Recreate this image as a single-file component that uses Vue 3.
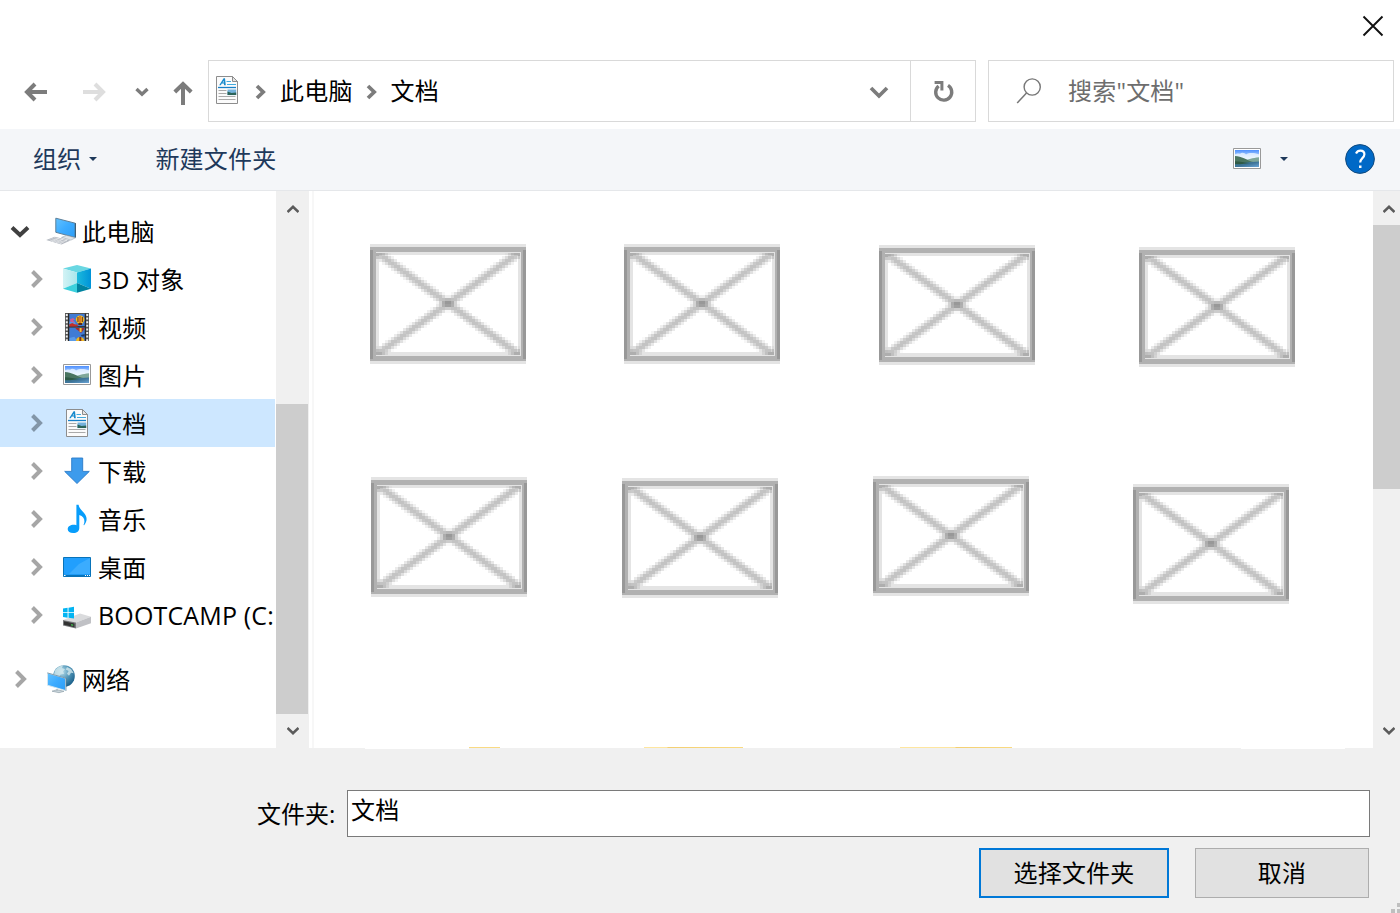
<script setup>
const tree = [
  { icon: 'pc', label: '此电脑', root: true, open: true },
  { icon: 'cube', label: '3D 对象' },
  { icon: 'film', label: '视频' },
  { icon: 'photo', label: '图片' },
  { icon: 'doc', label: '文档', selected: true },
  { icon: 'down', label: '下载' },
  { icon: 'music', label: '音乐' },
  { icon: 'desk', label: '桌面' },
  { icon: 'drive', label: 'BOOTCAMP (C:', latin: true },
  { icon: 'net', label: '网络', root: true, spaced: true },
]

// Soft diagonals of the thumbnail placeholder, sampled on a 3px grid
const cells = []
const len = Math.hypot(156, 112)
for (let r = 3; r < 37; r++) {
  for (let c = 2; c < 50; c++) {
    const x = c * 3 + 1.5 - 78
    const y = r * 3 + 1.5 - 59.5
    const shade = (s) => {
      const d = Math.abs(x * 112 - s * y * 156) / len
      return Math.max(0, Math.min(1, (6.2 - d) / 4.8)) * 0.235
    }
    const a = 1 - (1 - shade(1)) * (1 - shade(-1))
    if (a > 0.015) cells.push({ x: c * 3, y: r * 3, a: a.toFixed(3) })
  }
}
</script>

<template>
  <div class="dialog">
    <svg class="defs" width="0" height="0">
      <defs>
        <linearGradient id="sky" x1="0" y1="0" x2="0" y2="1">
          <stop offset="0" stop-color="#4d8fff" /><stop offset="0.45" stop-color="#c6e2fc" /><stop offset="1" stop-color="#c5e5f6" />
        </linearGradient>
        <linearGradient id="sea" x1="0" y1="0" x2="1" y2="1">
          <stop offset="0" stop-color="#3f7f9c" /><stop offset="0.5" stop-color="#3d7397" /><stop offset="1" stop-color="#6aa5d8" />
        </linearGradient>
        <linearGradient id="screen" x1="0" y1="0" x2="1" y2="1">
          <stop offset="0" stop-color="#62c2ff" /><stop offset="0.5" stop-color="#3cabff" /><stop offset="1" stop-color="#2d9df5" />
        </linearGradient>
        <linearGradient id="cubeL" x1="0" y1="0" x2="1" y2="0"><stop offset="0" stop-color="#d3f3f5" /><stop offset="1" stop-color="#a9e6ec" /></linearGradient>
        <linearGradient id="cubeR" x1="0" y1="0" x2="1" y2="0"><stop offset="0" stop-color="#1bb9dc" /><stop offset="1" stop-color="#0093d8" /></linearGradient>
        <radialGradient id="globe" cx="0.4" cy="0.3" r="0.75"><stop offset="0" stop-color="#b9dfec" /><stop offset="0.5" stop-color="#5296b8" /><stop offset="1" stop-color="#155a85" /></radialGradient>
        <symbol id="i-pc" viewBox="0 0 32 32">
          <path d="M9.8 3.2 29.2 8.2V22.5L9.8 17.3z" fill="url(#screen)" stroke="#5c7f99" stroke-width="1" />
          <path d="M28.9 8 29.9 8.3V22.5l-1 .3z" fill="#36576e" />
          <path d="M15.5 22.4l5-2 9 2.4-4.6 2.3z" fill="#dfe4e8" stroke="#8999a5" stroke-width=".5" />
          <path d="M.2 25 8.7 21.8 24.5 25.4 15.5 29.6z" fill="#b3b8c0" />
          <path d="M3.5 24.8l12 3.5M5.5 23.7l12 3.4M8 22.7l13 3.1M6 26.8l7.5-3.7M9.7 27.8l7.5-3.7M13.5 28.8l7.7-3.8" stroke="#f1f3f5" stroke-width=".6" />
        </symbol>
        <symbol id="i-cube" viewBox="0 0 32 32">
          <path d="M2 5.5 16 2l14 3.5L16 9.6z" fill="#69d7e2" />
          <path d="M2 5.5 16 9.6V20L2 25.8z" fill="url(#cubeL)" />
          <path d="M30 5.5 16 9.6V20l14 5.8z" fill="url(#cubeR)" />
          <path d="M2 25.8 16 20v9.8z" fill="#3bd0dc" /><path d="M30 25.8 16 20v9.8z" fill="#0083a0" />
        </symbol>
        <symbol id="i-film" viewBox="0 0 32 32">
          <path d="M4 2h24v28H4z" fill="#555" /><path d="M8.3 3h15.4v12.4H8.3zM8.3 16.5h15.4V30H8.3z" fill="#407bd4" />
          <path d="M8.3 10.5h5l3 4.9H8.3zM8.3 27l5-1.3 3 4.3h-8z" fill="#5a9be8" />
          <path d="M5.8 3v27M26.2 3v27" stroke="#eee" stroke-width="1.9" stroke-dasharray="2 1.6" />
          <path d="M7.6 2.5V30M24.4 2.5V30M8 15.8h16" stroke="#242424" stroke-width="1" />
          <path d="M14.8 8.5a4.3 4 0 0 1 8.6 0c0 2-2.2 3.5-2.5 5.3h-3.4c-.2-1.8-2.7-3.3-2.7-5.3z" fill="#f2bd1f" />
          <path d="M16.4 6h1.1v5h-1.1zM20.8 6h1.1v5h-1.1z" fill="#7a351c" /><path d="M18.5 5h1v7h-1z" fill="#c43a2e" />
          <path d="M17.3 12h3.8v2h-3.8z" fill="#5a2b14" />
          <path d="M14.5 17h9c-.1 2-2.2 2.7-2.6 4.4h-2C18.5 19.5 15 19 14.5 17z" fill="#a42d33" /><path d="M18.6 17h2v4h-2z" fill="#f2c72e" />
          <path d="M9 8.2l3-1.1 2 1.3-2 1.2 2.2 2.2-4.8-1z" fill="#cd5d96" />
          <path d="M8.3 13.3l3-1.2 2.4 1.2 3 .4v1.7H8.3z" fill="#c52e25" />
          <path d="M15 30c0-5.5 8-5.5 8.5 0z" fill="#efb620" /><path d="M18.3 26h2v4h-2z" fill="#7a351c" /><path d="M20 24l3.7-1v2.6h-3z" fill="#17386e" />
        </symbol>
        <symbol id="i-photo" viewBox="0 0 32 32">
          <path d="M2.5 5.5h27v20h-27z" fill="#fff" stroke="#999" /><path d="M4 7h24v17H4z" fill="url(#sky)" />
          <path d="M4 11.5c2-1.5 4-.9 5-.8 2-1.8 5-.6 6 .8 3-1.8 7-2 13-.3V17H4z" fill="#f4faff" opacity=".75" />
          <path d="M12 17.5c6-.8 9-2.6 16-3.2V20H12z" fill="#7fa79a" />
          <path d="M4 13c3 .2 6.5 1 9 2.2 3 1.4 6 3.2 10 4L18 21H4z" fill="#4a7560" />
          <path d="M4 20l24-1.4V24H4z" fill="url(#sea)" /><path d="M4 18.3c5 .3 9 1 15 1.6L9 21.3H4z" fill="#2f5a45" />
        </symbol>
        <symbol id="i-doc" viewBox="0 0 32 32">
          <path d="M5.5 2.5h16l5 5v22h-21z" fill="#fbfbfb" stroke="#8d8d8d" /><path d="M21.5 2.5v5h5z" fill="#e4e4e4" stroke="#8d8d8d" />
          <path d="M7 13.5h18" stroke="#1680c8" stroke-width="1.3" /><path d="M8.2 11.2h1.6l1-1.7h2l.3 1.7h1.7L14 4.2h-1.4z" fill="#168acd" /><path d="M11.6 8.5h1.2l-.2-1.8z" fill="#fbfbfb" />
          <path d="M15.5 7.5h4.5M16 10.5h9" stroke="#41a9dd" /><path d="M7.5 16.5h8M7.5 19.5h8M7.5 22.5h17M7.5 25.5h17" stroke="#aaa" />
          <path d="M16.5 15.5h8.7v5.6h-8.7z" fill="#75b2dc" /><path d="M16.5 17.5l4 1.5 4.7-.6v2.7h-8.7z" fill="#2b6459" />
        </symbol>
        <symbol id="i-down" viewBox="0 0 32 32"><path d="M10.7 3h11v13.4h6.6L16 28.5 3.7 16.4h7z" fill="#3d9bec" stroke="#2a7ac8" stroke-width=".9" /></symbol>
        <symbol id="i-music" viewBox="0 0 32 32"><path d="M15.4 1.8h2.2c.6 5.5 8 8 8 14.3 0 2.4-1 4.3-2.5 6.2l-.6-.4c1.8-3.8 1.2-8.2-4.2-10v13c0 3-2.3 5.1-6.1 5.1-3.3 0-5.5-1.3-5.5-3.7 0-3.5 4.4-5.3 8.7-4.1z" fill="#079dfb" /></symbol>
        <symbol id="i-desk" viewBox="0 0 32 32">
          <path d="M2.5 6.5h27v19h-27z" fill="#219ffd" stroke="#0873b9" /><path d="M29 7v16H8L18 13l11-6z" fill="#4db5ff" opacity=".6" />
          <path d="M3 23.9h26v1.4H3z" fill="#0873b9" /><path d="M3 24.5h1.5M24 24.5h1M26 24.5h1M28 24.5h1" stroke="#fff" />
        </symbol>
        <symbol id="i-drive" viewBox="0 0 32 32">
          <path d="M2 21 19 14.5 30 17.8 15 23.6z" fill="#dadbdd" /><path d="M15 23.6 30 17.8v6.5l-15 5.2z" fill="#c0c1c5" /><path d="M2 21l13 2.6v6L2 26.6z" fill="#77797c" />
          <path d="M3 22.2l10.5 2.2v3.8L3 25.8z" fill="#333" /><path d="M10 25.1l2.2.5v1.4l-2.2-.5z" fill="#3fae4b" />
          <path d="M2 9.6l4.6-.8v4.5H2zM7.5 8.7 13 7.8v5.5H7.5zM2 14.1h4.6v4.6L2 18zM7.5 14.1H13v5.5l-5.5-.8z" fill="#03b4f2" />
        </symbol>
        <symbol id="i-net" viewBox="0 0 32 32">
          <circle cx="18" cy="13" r="10.8" fill="url(#globe)" />
          <path d="M9 7.5c2-3 5-4.6 8-4.9l-1 2.5 3 1.2-2 2.3 1.2 2.2-3.5.6-2 2.6-5-1.6zM21 4l4 2 2.8 4.3-2.8-.6-2 3-2-2 1.6-2.8-2.8-1.5z" fill="#d3e9ee" opacity=".8" />
          <path d="M1.5 10l18 5.2V27.5L1.5 22.2z" fill="url(#screen)" stroke="#d6e6ee" stroke-width=".9" /><path d="M1.3 9.9 20 15.2v12.7" fill="none" stroke="#617f91" stroke-width=".7" />
          <path d="M11 26v1.8m-5 .4 5-1.5 7 1.6-5 1.4z" fill="#cbd6dc" stroke="#8798a2" stroke-width=".6" />
        </symbol>
        <symbol id="thumb" viewBox="0 0 156 120">
          <g shape-rendering="crispEdges">
            <path d="M0 0h156v120H0z" fill="#e4e4e4" /><path d="M0 3h156v114H0z" fill="#b1b1b1" />
            <path d="M0 6h3v109H0zM153 6h3v109h-3z" fill="#989898" />
            <path d="M6 8h145v104H6z" fill="#e4e4e4" /><path d="M9 11h139v97H9z" fill="#fff" />
            <rect v-for="(p, i) in cells" :key="i" :x="p.x" :y="p.y" width="3" height="3" fill="#000" :fill-opacity="p.a" />
          </g>
        </symbol>
      </defs>
    </svg>

    <header class="titlebar">
      <svg width="22" height="22" viewBox="0 0 22 22"><path d="M1.5 1.5l19 19M20.5 1.5l-19 19" stroke="#111" stroke-width="1.9" /></svg>
    </header>

    <nav class="nav">
      <div class="history">
        <svg class="back" width="24" height="20" viewBox="0 0 24 20"><path d="M23 10H3M11 2l-8 8 8 8" class="arrow" /></svg>
        <svg class="fwd" width="24" height="20" viewBox="0 0 24 20"><path d="M1 10h20M13 2l8 8-8 8" class="arrow pale" /></svg>
        <svg class="recent" width="14" height="10" viewBox="0 0 14 10"><path d="M1.5 2 7 7.2 12.5 2" class="arrow" /></svg>
        <svg class="up" width="20" height="24" viewBox="0 0 20 24"><path d="M10 24V3M1.8 11 10 3l8.2 8" class="arrow" /></svg>
      </div>
      <div class="address">
        <svg class="adr-icon" width="32" height="32"><use href="#i-doc" /></svg>
        <svg class="sep" width="12" height="16" viewBox="0 0 12 16"><path d="M2 2l6.2 6L2 14" /></svg>
        <span class="crumb">此电脑</span>
        <svg class="sep" width="12" height="16" viewBox="0 0 12 16"><path d="M2 2l6.2 6L2 14" /></svg>
        <span class="crumb">文档</span>
        <svg class="drop" width="20" height="14" viewBox="0 0 20 14"><path d="M2 2l8 8 8-8" /></svg>
      </div>
      <div class="refresh">
        <svg width="22" height="24" viewBox="0 0 22 24"><path d="M16 6.4A8 8 0 1 1 6.6 7" fill="none" stroke="#7c7c7c" stroke-width="3.4" /><path d="M2.6 2h8.8v9.4H8.4V5H2.6z" fill="#7c7c7c" /></svg>
      </div>
      <div class="search">
        <svg width="26" height="28" viewBox="0 0 26 28"><circle cx="16.2" cy="10" r="8.1" fill="none" stroke="#777" stroke-width="1.4" /><path d="M10.5 16 1.2 26" stroke="#777" stroke-width="1.5" /></svg>
        <span>搜索"文档"</span>
      </div>
    </nav>

    <div class="toolbar">
      <span class="cmd">组织</span><i class="caret"></i>
      <span class="cmd new">新建文件夹</span>
      <svg class="view" width="32" height="32"><use href="#i-photo" /></svg><i class="caret view-caret"></i>
      <svg class="help" width="30" height="30" viewBox="0 0 30 30">
        <circle cx="15" cy="15" r="14.4" fill="#0069c7" stroke="#124a7d" stroke-width="1" />
        <path d="M11 9.5c1-2 2.5-2.8 4.4-2.8 2.4 0 4 1.4 4 3.6 0 3.7-4.2 4-4.2 8.2" fill="none" stroke="#fff" stroke-width="2.2" /><path d="M14 21.5h2.5V24H14z" fill="#fff" />
      </svg>
    </div>

    <main class="body">
      <ul class="tree">
        <li v-for="n in tree" :key="n.label" :class="{ root: n.root, sel: n.selected, spaced: n.spaced }">
          <svg v-if="n.open" class="tw open" width="20" height="18" viewBox="0 0 20 18"><path d="M2 5.5l8 7.5 8-7.5" /></svg>
          <svg v-else class="tw" width="20" height="18" viewBox="0 0 20 18"><path d="M6.5 1.5 14 9 6.5 16.5" /></svg>
          <svg class="ico" width="32" height="32"><use :href="'#i-' + n.icon" /></svg>
          <span :class="{ latin: n.latin }">{{ n.label }}</span>
        </li>
      </ul>
      <div class="bar left">
        <svg width="12" height="10" viewBox="0 0 12 10"><path d="M.5 8l5.5-5.2L11.5 8" /></svg>
        <div class="thumb"></div>
        <svg width="12" height="10" viewBox="0 0 12 10"><path d="M.5 2 6 7.2 11.5 2" /></svg>
      </div>
      <div class="split"></div>
      <section class="files">
        <div class="row r1"><svg v-for="i in 4" :key="i" width="156" height="120"><use href="#thumb" /></svg></div>
        <div class="row r2"><svg v-for="i in 4" :key="i" width="156" height="120"><use href="#thumb" /></svg></div>
        <div class="slivers"><i></i><i></i><i></i></div>
      </section>
      <div class="bar right">
        <svg width="12" height="10" viewBox="0 0 12 10"><path d="M.5 8l5.5-5.2L11.5 8" /></svg>
        <div class="thumb"></div>
        <svg width="12" height="10" viewBox="0 0 12 10"><path d="M.5 2 6 7.2 11.5 2" /></svg>
      </div>
    </main>

    <footer class="foot">
      <div class="edge"><i></i><i></i></div>
      <div class="field"><label>文件夹:</label><div class="input">文档</div></div>
      <div class="actions"><button class="primary">选择文件夹</button><button>取消</button></div>
      <svg class="grip" width="9" height="10" viewBox="0 0 9 10"><path d="M6 0h4v4H6zM0 6h4v4H0zM6 6h4v4H6z" fill="#bfbfbf" /></svg>
    </footer>
  </div>
</template>

<style>
html, body { margin: 0; overflow: hidden; }
</style>

<style scoped>
.dialog { width: 1400px; height: 913px; background: #fff; display: flex; flex-direction: column; overflow: hidden; font-family: "Open Sans", "Noto Sans CJK SC", sans-serif; font-size: 24px; font-weight: 400; line-height: 32px; letter-spacing: 0.2px; color: #000; white-space: nowrap; }
svg { flex: none; display: block; }
.defs { position: absolute; }
.titlebar { height: 60px; flex: none; display: flex; justify-content: flex-end; padding: 15px 16px 0 0; box-sizing: border-box; }
.nav { height: 62px; flex: none; display: flex; }
.history { width: 208px; display: flex; align-items: center; padding: 2px 0 0 24px; box-sizing: border-box; }
.arrow { fill: none; stroke: #7c7c7c; stroke-width: 4; }
.pale { stroke: #dedede; }
.fwd { margin-left: 34px; }
.recent { margin-left: 29px; }
.recent .arrow { stroke-width: 3.4; }
.up { margin: 2px 0 0 24px; }
.address { width: 703px; box-sizing: border-box; border: 1px solid #d9d9d9; display: flex; align-items: center; }
.adr-icon { margin: -2px 0 0 2px; }
.sep { margin-left: 12px; margin-top: 2px; }
.sep path, .drop path { fill: none; stroke: #7c7c7c; stroke-width: 3.7; }
.crumb { margin: 0 0 0 13px; }
.crumb + .sep { margin-left: 13px; }
.crumb + .sep + .crumb { margin-left: 13px; }
.drop { margin: 4px 21px 0 auto; }
.refresh { width: 65px; box-sizing: border-box; border: 1px solid #d9d9d9; border-left: 0; display: flex; align-items: center; justify-content: center; }
.search { width: 406px; margin-left: 12px; box-sizing: border-box; border: 1px solid #d9d9d9; display: flex; align-items: center; color: #6d6d6d; padding-left: 27px; }
.search span { margin: 0 0 0 26px; }
.toolbar { height: 62px; flex: none; margin-top: 7px; box-sizing: border-box; background: #f4f6f9; border-bottom: 1px solid #e5e7ea; display: flex; align-items: center; padding-left: 33px; color: #1e395b; }
.cmd { margin-top: -1px; }
.caret { border: 4px solid transparent; border-top-color: #1e395b; border-bottom: 0; margin: -2px 0 0 8px; }
.new { margin-left: 58px; }
.view { margin: -1px 0 0 auto; }
.view-caret { margin-left: 17px; }
.help { margin: -1px 25px 0 57px; }
.body { height: 557px; flex: none; display: flex; }
.tree { width: 276px; box-sizing: border-box; margin: 0; padding: 16px 0 0; list-style: none; }
.tree li { height: 48px; width: 275px; box-sizing: border-box; padding-left: 28px; display: flex; align-items: center; }
.tree li.root { padding-left: 12px; }
.tree li.spaced { margin-top: 16px; }
.tree li.sel { background: #cde7ff; }
.tw { margin-left: -2px; }
.tw path { fill: none; stroke: #a6a6a6; stroke-width: 4; }
.sel .tw path { stroke: #8296a8; }
.tw.open path { stroke: #404040; }
.ico { margin-left: 15px; }
.root .ico { margin-left: 16px; }
.tree span { margin: 1px 0 0 5px; }
.tree span.latin { margin-top: -1px; font-size: 25px; letter-spacing: 0.15px; }
.tree .root span { margin-left: 4px; }
.bar { background: #f0f0f0; display: flex; flex-direction: column; align-items: center; box-sizing: border-box; padding-top: 14px; }
.bar path { fill: none; stroke: #5b5b5b; stroke-width: 2.6; }
.bar .thumb { background: #cdcdcd; align-self: stretch; }
.bar svg:last-child { margin-top: auto; margin-bottom: 12px; }
.left { width: 33px; }
.left .thumb { margin: 189px 1px 0 0; height: 310px; }
.bar svg:first-child { margin-top: -1px; margin-bottom: 1px; }
.split { width: 2px; margin-left: 3px; background: #f7f7f7; }
.files { width: 1059px; position: relative; }
.row { display: flex; align-items: flex-start; }
.r1 { height: 233px; padding: 53px 0 0 56px; box-sizing: border-box; }
.r1 svg + svg { margin-left: 98px; }
.r1 svg:nth-child(3) { margin: 1px 0 0 99px; }
.r1 svg:nth-child(4) { margin: 3px 0 0 104px; }
.r2 { padding: 52px 0 0 57px; }
.r2 svg:nth-child(1) { margin-top: 1px; }
.r2 svg:nth-child(2) { margin: 2px 0 0 95px; }
.r2 svg:nth-child(3) { margin-left: 95px; }
.r2 svg:nth-child(4) { margin: 8px 0 0 104px; }
.slivers { position: absolute; left: 155px; bottom: 0; display: flex; height: 1px; }
.slivers i { width: 31px; background: #f9da83; }
.slivers i:nth-child(2) { width: 99px; margin-left: 144px; background: linear-gradient(90deg, #fee6a0 23px, #f3cf72 24px, #fadb82); }
.slivers i:nth-child(3) { width: 112px; margin-left: 157px; background: linear-gradient(90deg, #fee6a0 55px, #f3cf72 56px, #fadb82); }
.right { width: 27px; padding-left: 5px; }
.right .thumb { margin: 10px 0 0 -5px; height: 264px; }
.foot { flex: 1; background: #f0f0f0; position: relative; }
.edge { height: 1px; display: flex; }
.edge i { width: 104px; margin-left: 365px; background: #fff; }
.edge i + i { margin-left: 772px; }
.field { display: flex; margin-top: 41px; padding-left: 257px; }
.field label { width: 90px; padding-top: 8px; box-sizing: border-box; letter-spacing: 0; }
.input { width: 1023px; height: 47px; box-sizing: border-box; border: 1px solid #7a7a7a; background: #fff; padding: 3px 3px 0; }
.actions { display: flex; justify-content: flex-end; gap: 26px; padding-right: 31px; margin-top: 11px; }
button { width: 174px; height: 50px; box-sizing: border-box; padding: 0; border: 1px solid #adadad; background: #e1e1e1; font: inherit; letter-spacing: 0.2px; color: #000; }
.primary { width: 190px; border: 2px solid #0078d7; }
.grip { position: absolute; right: 0; bottom: 0; }
</style>
